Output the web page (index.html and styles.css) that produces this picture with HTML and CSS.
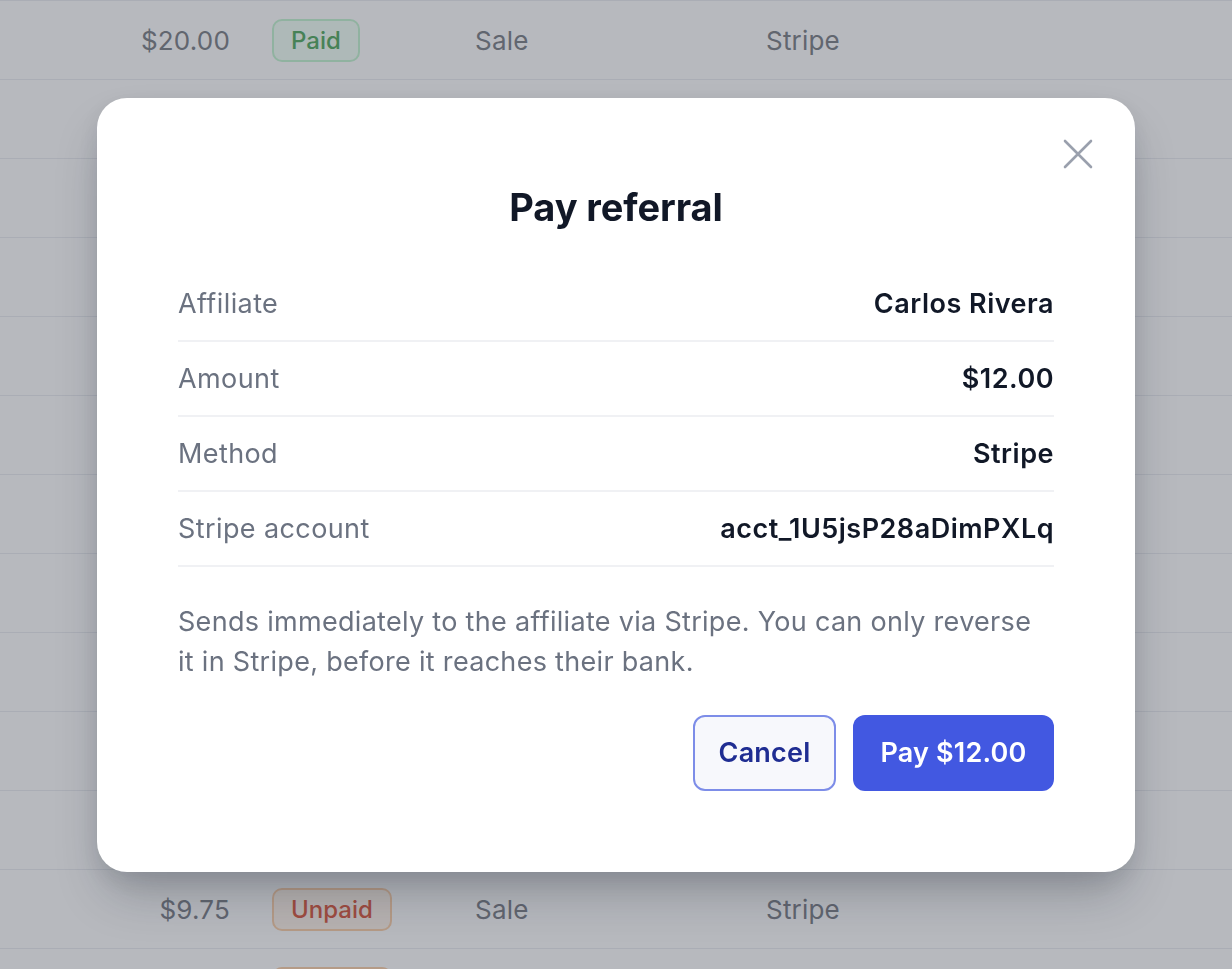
FILE: index.html
```html
<!DOCTYPE html>
<html lang="en">
<head>
<meta charset="utf-8">
<title>Pay referral</title>
<link rel="stylesheet" href="styles.css">
</head>
<body>
<div class="page">
<div class="table">
  <div class="row"><span class="amt">$20.00</span><span class="cell"><span class="badge paid">Paid</span></span><span class="cell">Sale</span><span class="cell">Stripe</span></div>
  <div class="row"><span class="amt">$12.00</span><span class="cell"><span class="badge unpaid">Unpaid</span></span><span class="cell">Sale</span><span class="cell">Stripe</span></div>
  <div class="row"><span class="amt">$15.00</span><span class="cell"><span class="badge paid">Paid</span></span><span class="cell">Sale</span><span class="cell">Stripe</span></div>
  <div class="row"><span class="amt">$8.50</span><span class="cell"><span class="badge paid">Paid</span></span><span class="cell">Sale</span><span class="cell">Stripe</span></div>
  <div class="row"><span class="amt">$30.00</span><span class="cell"><span class="badge unpaid">Unpaid</span></span><span class="cell">Sale</span><span class="cell">Stripe</span></div>
  <div class="row"><span class="amt">$10.00</span><span class="cell"><span class="badge paid">Paid</span></span><span class="cell">Sale</span><span class="cell">Stripe</span></div>
  <div class="row"><span class="amt">$22.00</span><span class="cell"><span class="badge paid">Paid</span></span><span class="cell">Sale</span><span class="cell">Stripe</span></div>
  <div class="row"><span class="amt">$5.00</span><span class="cell"><span class="badge unpaid">Unpaid</span></span><span class="cell">Sale</span><span class="cell">Stripe</span></div>
  <div class="row"><span class="amt">$18.00</span><span class="cell"><span class="badge paid">Paid</span></span><span class="cell">Sale</span><span class="cell">Stripe</span></div>
  <div class="row"><span class="amt">$40.00</span><span class="cell"><span class="badge paid">Paid</span></span><span class="cell">Sale</span><span class="cell">Stripe</span></div>
  <div class="row"><span class="amt">$14.00</span><span class="cell"><span class="badge paid">Paid</span></span><span class="cell">Sale</span><span class="cell">Stripe</span></div>
  <div class="row"><span class="amt">$9.75</span><span class="cell"><span class="badge unpaid">Unpaid</span></span><span class="cell">Sale</span><span class="cell">Stripe</span></div>
  <div class="row"><span class="amt">$6.00</span><span class="cell"><span class="badge unpaid">Unpaid</span></span><span class="cell">Sale</span><span class="cell">Stripe</span></div>
</div>
</div>

<div class="overlay">
  <div class="modal" role="dialog" aria-labelledby="modal-title">
    <button class="close" type="button" aria-label="Close">
      <svg width="30" height="30" viewBox="0 0 30 30" fill="none" stroke="currentColor" stroke-width="2.6" stroke-linecap="round"><path d="M2 2L28 28M28 2L2 28"/></svg>
    </button>
    <h2 class="title" id="modal-title">Pay referral</h2>
    <dl class="details">
      <div class="drow"><dt>Affiliate</dt><dd>Carlos Rivera</dd></div>
      <div class="drow"><dt>Amount</dt><dd>$12.00</dd></div>
      <div class="drow"><dt>Method</dt><dd>Stripe</dd></div>
      <div class="drow"><dt>Stripe account</dt><dd>acct_1U5jsP28aDimPXLq</dd></div>
    </dl>
    <p class="note">Sends immediately to the affiliate via Stripe. You can only reverse it in Stripe, before it reaches their bank.</p>
    <div class="actions">
      <button class="btn btn-cancel" type="button">Cancel</button>
      <button class="btn btn-pay" type="button">Pay $12.00</button>
    </div>
  </div>
</div>
</body>
</html>
```

FILE: styles.css
```css
* { box-sizing: border-box; }

html, body {
  margin: 0;
  padding: 0;
  height: 100%;
  overflow: hidden;
}

body {
  font-family: Inter, "Noto Sans", "Liberation Sans", sans-serif;
  background: #ffffff;
  color: #111827;
}

.page {
  height: 969px;
  overflow: hidden;
}

/* background table */
.table {
  border-top: 1.5px solid #eceef2;
}

.row {
  display: grid;
  grid-template-columns: 230px 245px 291px 1fr;
  height: 79px;
  align-items: center;
  border-bottom: 1.5px solid #eceef2;
  font-size: 26px;
  letter-spacing: 0.2px;
  color: #85888f;
}

.amt {
  text-align: right;
}

.cell:nth-child(2) {
  padding-left: 42px;
}

.badge {
  display: inline-flex;
  align-items: center;
  height: 43px;
  padding: 0 17px;
  border-radius: 10px;
  border: 2px solid;
  font-size: 24px;
  font-weight: 500;
  letter-spacing: 0;
}

.badge.paid {
  color: #5fb16c;
  background: #f3fff6;
  border-color: #c8f5d4;
}

.badge.unpaid {
  color: #dd644c;
  background: #fff5ec;
  border-color: #fdd4b0;
}

/* overlay + modal */
.overlay {
  position: fixed;
  inset: 0;
  background: rgba(17, 24, 39, 0.3);
  display: flex;
  align-items: center;
  justify-content: center;
}

.modal {
  position: relative;
  width: 1038px;
  height: 774px;
  background: #ffffff;
  border-radius: 30px;
  padding: 85px 81px 81px;
  box-shadow: 0 28px 50px -10px rgba(17, 24, 39, 0.28), 0 8px 20px rgba(17, 24, 39, 0.08);
  display: flex;
  flex-direction: column;
}

.close {
  position: absolute;
  top: 41px;
  right: 42px;
  width: 30px;
  height: 30px;
  padding: 0;
  border: 0;
  background: none;
  color: #9aa0ad;
  display: flex;
}

.title {
  margin: 0 0 36px;
  text-align: center;
  font-size: 38px;
  line-height: 48px;
  font-weight: 700;
  color: #111827;
  letter-spacing: -0.1px;
}

.details {
  margin: 0;
}

.drow {
  display: flex;
  justify-content: space-between;
  align-items: center;
  height: 75px;
  border-bottom: 2px solid #f0f1f4;
  font-size: 27px;
  letter-spacing: 0.4px;
}

.drow dt {
  color: #6b7280;
}

.drow dd {
  margin: 0;
  color: #111827;
  font-weight: 600;
  letter-spacing: 0.5px;
}

.note {
  margin: 35px 0 0;
  font-size: 27px;
  line-height: 40px;
  letter-spacing: 0.3px;
  color: #6b7280;
}

.actions {
  margin-top: 33px;
  display: flex;
  justify-content: flex-end;
  gap: 17px;
}

.btn {
  height: 76px;
  border-radius: 12px;
  font-family: inherit;
  font-size: 27px;
  font-weight: 600;
  letter-spacing: 0.2px;
  padding: 0 16px;
  cursor: pointer;
}

.btn-cancel {
  width: 143px;
  background: #f7f8fc;
  border: 2px solid #7d8de8;
  color: #1f2d92;
}

.btn-pay {
  width: 201px;
  background: #4258e1;
  border: 0;
  color: #ffffff;
}
```
